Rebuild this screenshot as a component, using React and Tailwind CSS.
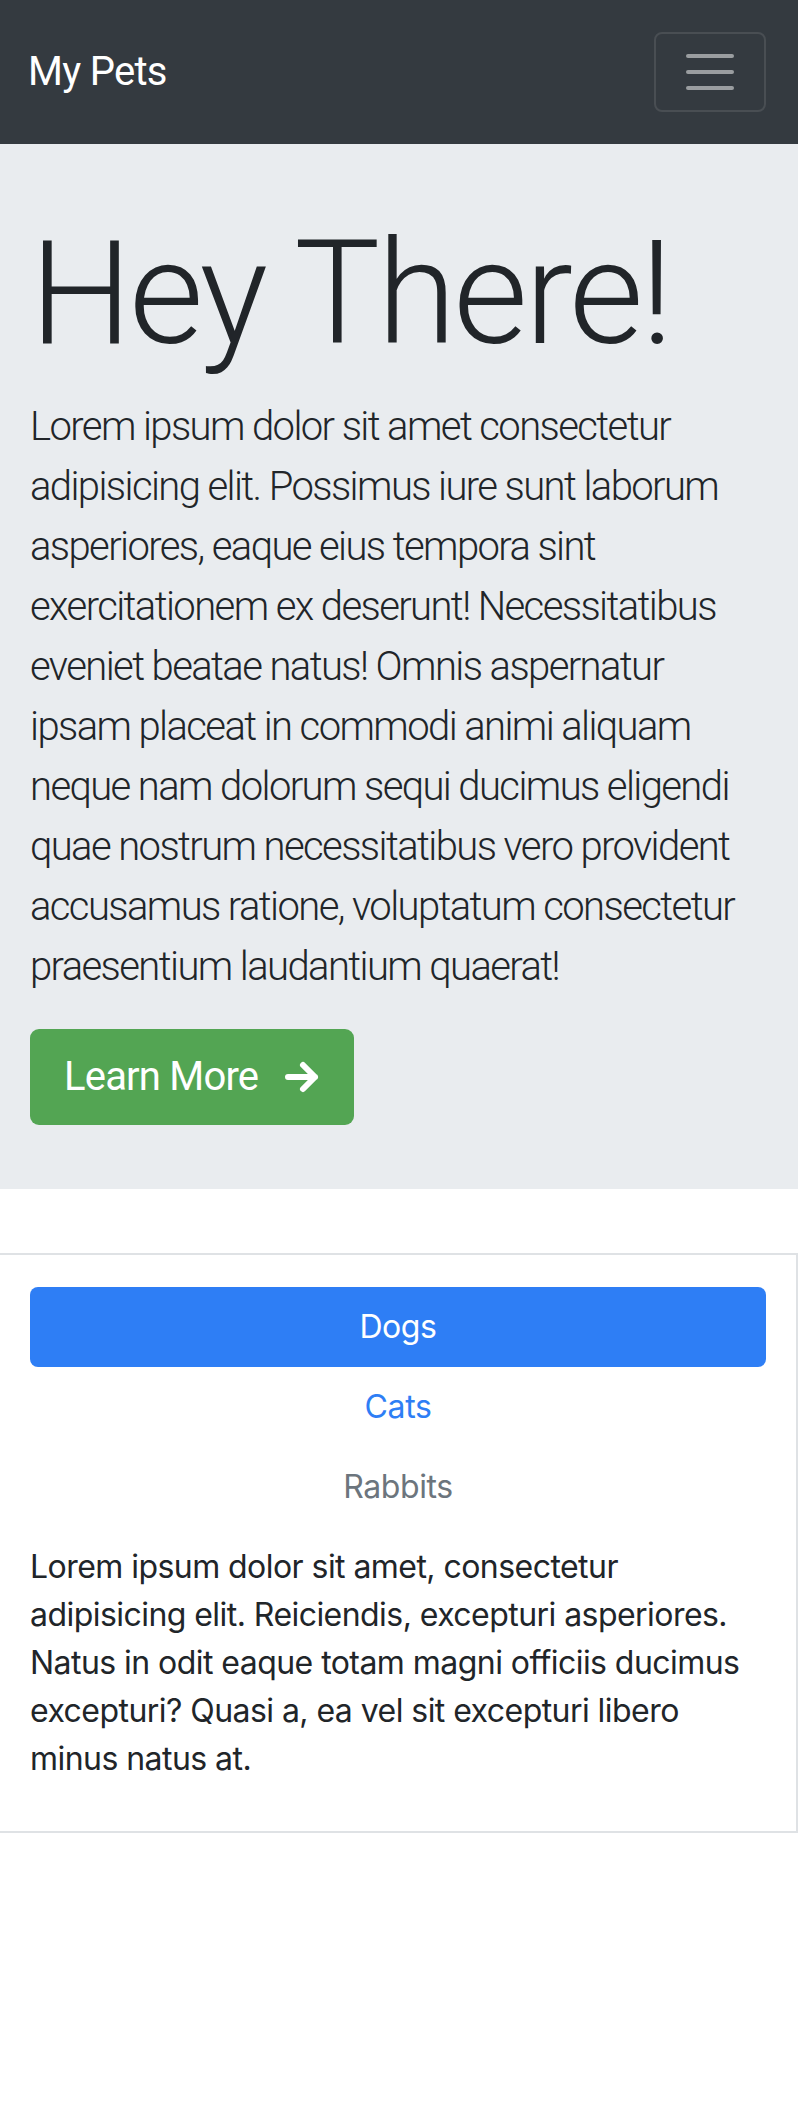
import React from "react";

const font = { fontFamily: "Inter, 'Liberation Sans', sans-serif" };
// big display text in the shot is tighter than Inter, Roboto sits closer
const display = { fontFamily: "Roboto, 'Liberation Sans', sans-serif" };

function Navbar() {
  return (
    <nav className="flex h-[144px] items-center justify-between bg-[#343a40] pl-[28px] pr-[32px]">
      <a className="text-[40px] leading-[60px] tracking-[-0.7px] text-white" style={display} href="#">
        My Pets
      </a>
      <button className="flex h-[80px] w-[112px] flex-col items-center justify-center gap-[12px] rounded-[8px] border-2 border-[#494e53]">
        <span className="block h-[4px] w-[48px] rounded-full bg-[#9a9da0]" />
        <span className="block h-[4px] w-[48px] rounded-full bg-[#9a9da0]" />
        <span className="block h-[4px] w-[48px] rounded-full bg-[#9a9da0]" />
      </button>
    </nav>
  );
}

function Hero() {
  return (
    <section className="bg-[#e9ecef] px-[30px] pt-[64px] pb-[64px] text-[#212529]" style={display}>
      <h1 className="mb-[16px] text-[144px] font-light leading-[1.2] tracking-[-3px]">Hey There!</h1>
      <p className="mb-[32px] text-[40px] font-light leading-[60px] tracking-[-1.6px]">
        Lorem ipsum dolor sit amet consectetur adipisicing elit. Possimus iure sunt laborum
        asperiores, eaque eius tempora sint exercitationem ex deserunt! Necessitatibus eveniet
        beatae natus! Omnis aspernatur ipsam placeat in commodi animi aliquam neque nam dolorum
        sequi ducimus eligendi quae nostrum necessitatibus vero provident accusamus ratione,
        voluptatum consectetur praesentium laudantium quaerat!
      </p>
      <a
        href="#"
        className="inline-flex h-[96px] w-[324px] items-center gap-[26px] rounded-[9px] bg-[#53a553] pl-[34px] text-[40px] leading-[60px] tracking-[-0.8px] text-white"
      >
        Learn More
        <svg width="36" height="36" viewBox="0 0 36 36" fill="none">
          <path
            d="M4 18h27M19 6l12 12-12 12"
            stroke="white"
            strokeWidth="6"
            strokeLinecap="round"
            strokeLinejoin="round"
          />
        </svg>
      </a>
    </section>
  );
}

function PetTabs() {
  return (
    <div className="border-y-2 border-r-2 border-[#dfe2e5] px-[30px] pt-[32px] pb-[48px]">
      <div className="flex flex-col text-center text-[32px] leading-[48px] tracking-[-0.4px]">
        <a href="#" className="rounded-[8px] bg-[#2e7ef5] py-[16px] text-white">
          Dogs
        </a>
        <a href="#" className="py-[16px] text-[#2e7ef5]">
          Cats
        </a>
        <span className="py-[16px] text-[#6c757d]">Rabbits</span>
      </div>
      <p className="mt-[16px] text-[32px] leading-[48px] tracking-[-0.55px] text-[#212529]">
        Lorem ipsum dolor sit amet, consectetur adipisicing elit. Reiciendis, excepturi asperiores.
        Natus in odit eaque totam magni officiis ducimus excepturi? Quasi a, ea vel sit excepturi
        libero minus natus at.
      </p>
    </div>
  );
}

export default function App() {
  return (
    <div className="min-h-[2102px] w-[798px] bg-white" style={font}>
      <Navbar />
      <Hero />
      <div className="mt-[64px]">
        <PetTabs />
      </div>
    </div>
  );
}
